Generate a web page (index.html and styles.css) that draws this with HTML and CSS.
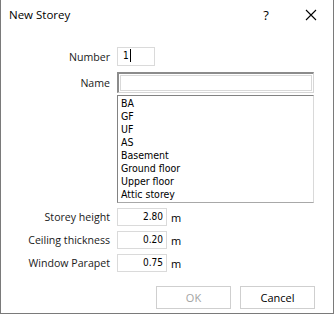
FILE: index.html
```html
<!DOCTYPE html>
<html>
<head>
<title>New Storey</title>
<link rel="stylesheet" href="styles.css">
</head>
<body>
<div class="dialog">
  <div class="titlebar">
    <span class="title">New Storey</span>
    <span class="help">?</span>
    <span class="close">
      <svg width="12" height="12" viewBox="0 0 12 12"><path d="M1 1 L11 11 M11 1 L1 11" stroke="#000" stroke-width="1.1" fill="none"/></svg>
    </span>
  </div>

  <div class="content">
    <div class="row number-row">
      <label class="lbl">Number</label>
      <div class="field number-field">1<span class="caret"></span></div>
    </div>

    <div class="row name-row">
      <label class="lbl name-lbl">Name</label>
      <div class="combo">
        <div class="combo-edit"><div class="combo-edit-inner"></div></div>
        <ul class="combo-list">
          <li>BA</li>
          <li>GF</li>
          <li>UF</li>
          <li>AS</li>
          <li>Basement</li>
          <li>Ground floor</li>
          <li>Upper floor</li>
          <li>Attic storey</li>
        </ul>
      </div>
    </div>

    <div class="row dim-row">
      <label class="lbl">Storey height</label>
      <div class="field dim-field">2.80</div>
      <span class="unit">m</span>
    </div>
    <div class="row dim-row">
      <label class="lbl">Ceiling thickness</label>
      <div class="field dim-field">0.20</div>
      <span class="unit">m</span>
    </div>
    <div class="row dim-row">
      <label class="lbl">Window Parapet</label>
      <div class="field dim-field">0.75</div>
      <span class="unit">m</span>
    </div>

    <div class="buttons">
      <button class="btn disabled">OK</button>
      <button class="btn">Cancel</button>
    </div>
  </div>
</div>
</body>
</html>
```

FILE: styles.css
```css
body { margin: 0; background: #fff; }

.dialog {
  width: 334px;
  height: 314px;
  box-sizing: border-box;
  border: 1px solid #7a7a7a;
  border-top: none;
  background: #fff;
  font-family: "Open Sans", sans-serif;
  color: #000;
}

.titlebar {
  height: 30px;
  display: flex;
  align-items: center;
  padding-left: 8px;
}
.title { font-size: 11.5px; flex: 1; padding-bottom: 1px; }
.help { font-size: 13px; width: 16px; margin-right: 31px; text-align: center; }
.close { width: 12px; height: 12px; margin-right: 16px; display: flex; }

.content { padding: 17px 18px 0 0; }

.row { display: flex; align-items: center; }
.lbl {
  width: 109px;
  margin-right: 7px;
  text-align: right;
  font-size: 10.6px;
  color: #1a1a1a;
}

.field {
  box-sizing: border-box;
  border: 1px solid #dadada;
  font-family: "DejaVu Sans Condensed", "DejaVu Sans", sans-serif;
  font-stretch: condensed;
  font-size: 10px;
}

.number-field {
  width: 38px;
  height: 19px;
  padding: 2px 0 0 5px;
  display: flex;
  align-items: flex-start;
}
.caret { display: inline-block; width: 1px; height: 13px; background: #000; margin-left: 1px; margin-top: -1px; }

.name-row { margin-top: 6px; align-items: flex-start; }
.name-lbl { margin-top: 4px; }

.combo { width: 197px; }
.combo-edit {
  height: 21px;
  box-sizing: border-box;
  border-top: 2px solid #8c8c8c;
  border-left: 2px solid #8c8c8c;
  border-right: 1px solid #d6d6d6;
  border-bottom: 1px solid #d6d6d6;
  padding: 1px;
}
.combo-edit-inner { height: 100%; box-sizing: border-box; border: 1px solid #d9d9d9; }

.combo-list {
  list-style: none;
  margin: 2px 0 0 0;
  padding: 1px 0 2px 3px;
  height: 108px;
  box-sizing: border-box;
  border-top: 1px solid #828282;
  border-left: 1px solid #828282;
  border-right: 1px solid #d9d9d9;
  border-bottom: 1px solid #a8a8a8;
  font-family: "DejaVu Sans Condensed", "DejaVu Sans", sans-serif;
  font-stretch: condensed;
  font-size: 10.5px;
  line-height: 13px;
}

.dim-row { margin-top: 5px; }
.dim-field {
  width: 50px;
  height: 18px;
  padding-right: 3px;
  text-align: right;
  line-height: 16px;
}
.unit { font-size: 11px; margin-left: 4px; }

.buttons {
  display: flex;
  justify-content: flex-end;
  gap: 9px;
  margin-top: 14px;
}
.btn {
  width: 75px;
  height: 23px;
  background: #fff;
  border: 1px solid #cfcfcf;
  font-family: "Open Sans", sans-serif;
  font-size: 11px;
  color: #000;
  padding: 0;
}
.btn.disabled { color: #a3a3a3; }
```
